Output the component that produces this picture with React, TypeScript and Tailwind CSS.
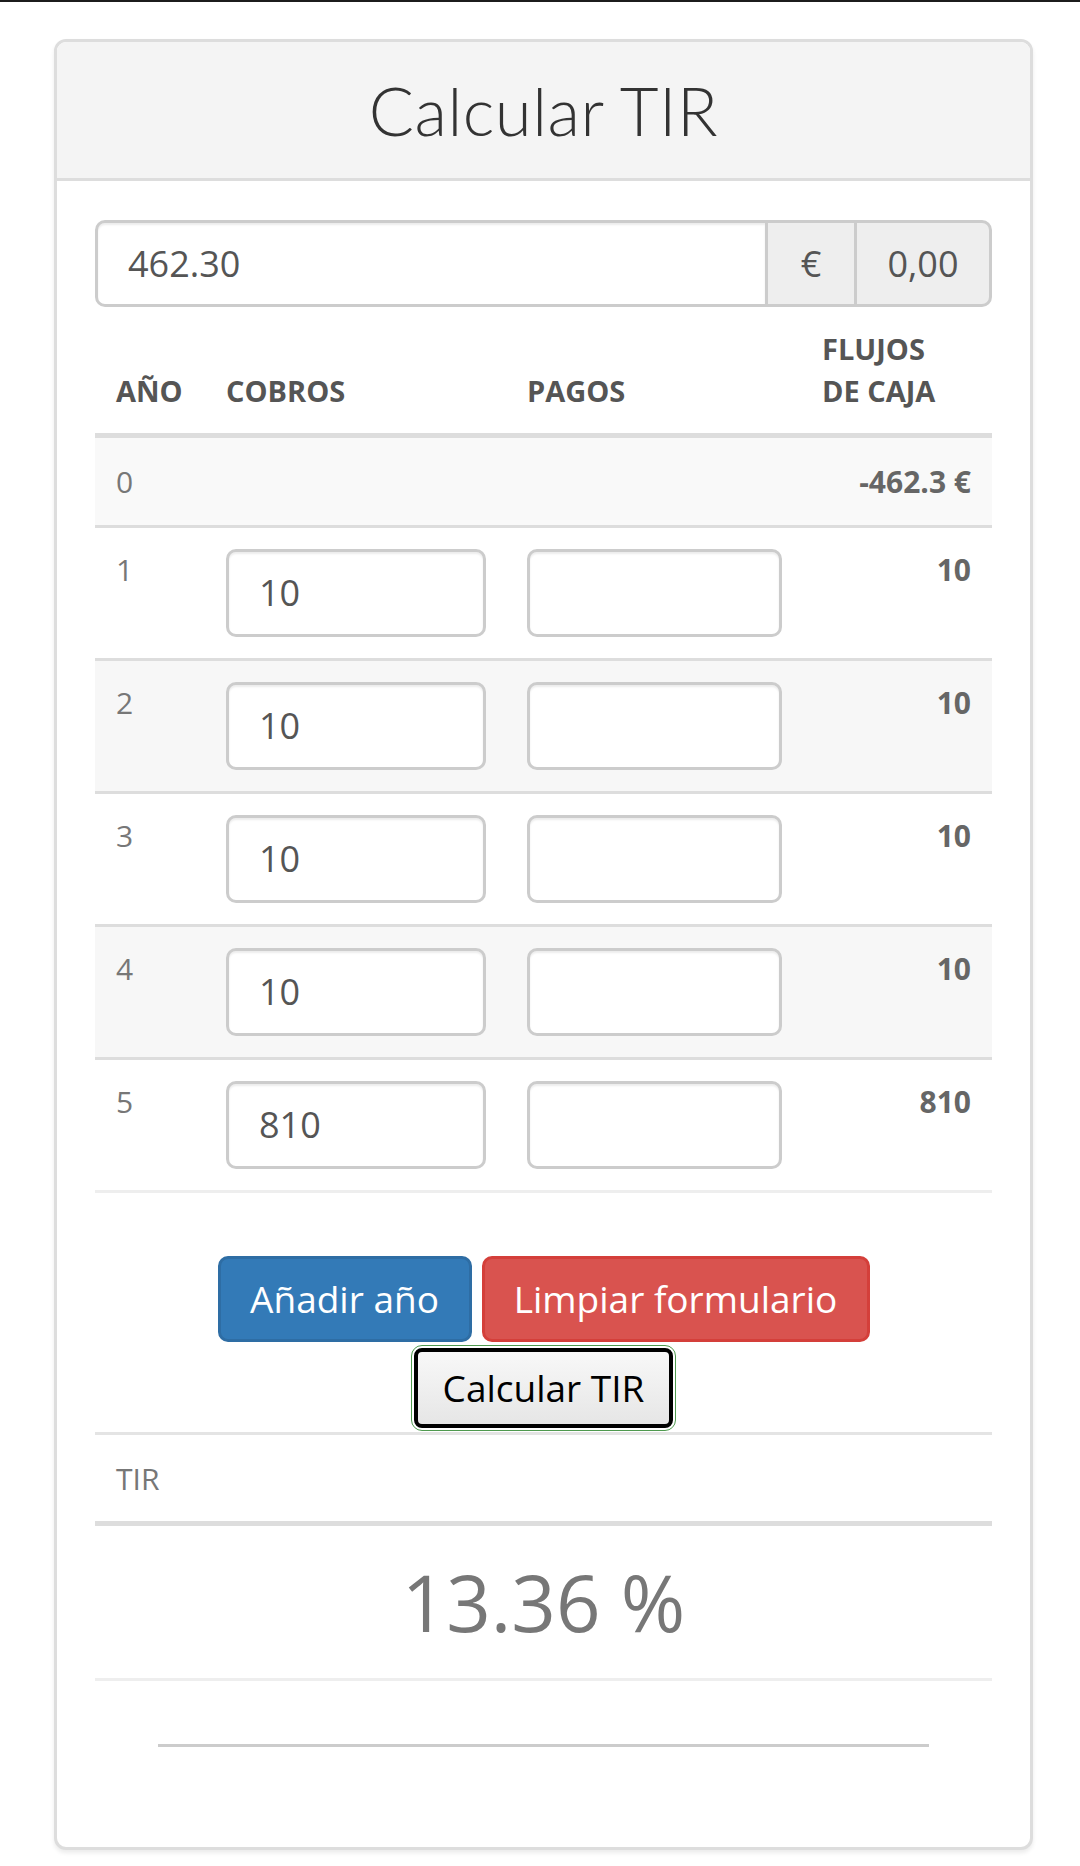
import React from "react";

const rows = [
  { year: 1, cobros: "10", flujo: "10" },
  { year: 2, cobros: "10", flujo: "10" },
  { year: 3, cobros: "10", flujo: "10" },
  { year: 4, cobros: "10", flujo: "10" },
  { year: 5, cobros: "810", flujo: "810" },
];

const CellInput = ({ value, w }: { value: string; w: string }) => (
  <div
    className={`${w} h-[88px] border-[3px] border-[#ccc] rounded-[10px] bg-white shadow-[inset_0_2px_2px_rgba(0,0,0,0.075)] flex items-center pl-[30px] text-[36px] text-[#555]`}
  >
    {value}
  </div>
);

const App = () => {
  return (
    <div className="min-h-[1866px] bg-white font-['Open_Sans',sans-serif]">
      <div className="h-[2px] bg-[#1c1c1c]" />
      <div className="ml-[54px] mt-[37px] w-[979px] h-[1811px] border-[3px] border-[#ddd] rounded-[12px] bg-white shadow-[0_3px_4px_rgba(0,0,0,0.08)] overflow-hidden flex flex-col">
        <div className="h-[139px] bg-[#f4f4f4] border-b-[3px] border-[#ddd] flex items-center justify-center">
          <h1 className="font-['Lato',sans-serif] font-light text-[67px] text-[#333] leading-none tracking-[0.5px]">
            Calcular TIR
          </h1>
        </div>

        <div className="px-[38px] pt-[39px] flex flex-col">
          {/* importe inicial */}
          <div className="flex h-[87px] text-[36px] text-[#555]">
            <div className="flex-1 border-[3px] border-[#ccc] rounded-l-[10px] flex items-center pl-[30px] shadow-[inset_0_2px_2px_rgba(0,0,0,0.075)]">
              462.30
            </div>
            <div className="w-[86px] bg-[#eee] border-y-[3px] border-[#ccc] flex items-center justify-center">
              €
            </div>
            <div className="w-[138px] bg-[#eee] border-[3px] border-[#ccc] rounded-r-[10px] flex items-center justify-center">
              0,00
            </div>
          </div>

          {/* tabla de flujos */}
          <table className="w-full table-fixed border-collapse text-[30px] leading-[42px]">
            <colgroup>
              <col className="w-[110px]" />
              <col className="w-[301px]" />
              <col className="w-[295px]" />
              <col className="w-[191px]" />
            </colgroup>
            <thead>
              <tr className="border-b-[5px] border-[#ddd] text-[#555] text-[29px] font-bold">
                <th className="p-[21px] pt-[22px] text-left align-bottom">AÑO</th>
                <th className="p-[21px] text-left align-bottom">COBROS</th>
                <th className="p-[21px] text-left align-bottom">PAGOS</th>
                <th className="p-[21px] text-left align-bottom">
                  FLUJOS
                  <br />
                  DE CAJA
                </th>
              </tr>
            </thead>
            <tbody className="text-[#777]">
              <tr className="bg-[#f9f9f9]">
                <td className="px-[21px] pt-[23px] pb-[22px]">0</td>
                <td className="px-[21px]"></td>
                <td className="px-[21px]"></td>
                <td className="px-[21px] pt-[23px] pb-[22px] text-right font-bold text-[#666]">-462.3 €</td>
              </tr>
              {rows.map((r, i) => (
                <tr
                  key={r.year}
                  className={`border-t-[3px] border-[#ddd] ${
                    i % 2 === 1 ? "bg-[#f7f7f7]" : "bg-white"
                  } ${i === rows.length - 1 ? "border-b-[3px] border-b-[#eee]" : ""}`}
                >
                  <td className="p-[21px] align-top">{r.year}</td>
                  <td className="p-[21px] align-top">
                    <CellInput value={r.cobros} w="w-[260px]" />
                  </td>
                  <td className="p-[21px] align-top">
                    <CellInput value="" w="w-[255px]" />
                  </td>
                  <td className="p-[21px] align-top text-right font-bold text-[#666]">
                    {r.flujo}
                  </td>
                </tr>
              ))}
            </tbody>
          </table>

          {/* botones */}
          <div className="mt-[63px] flex justify-center gap-[10px] text-[37px]">
            <button className="w-[254px] h-[86px] rounded-[10px] bg-[#337ab7] border-[3px] border-[#2e6da4] text-white">
              Añadir año
            </button>
            <button className="w-[388px] h-[86px] rounded-[10px] bg-[#d9534f] border-[3px] border-[#d43f3a] text-white">
              Limpiar formulario
            </button>
          </div>
          <div className="mt-[3px] flex justify-center">
            <span className="inline-flex p-[2px] border-[1.5px] border-[#4f9a4f] rounded-[11px]">
              <button className="w-[259px] h-[80px] border-[4px] border-black rounded-[8px] bg-gradient-to-b from-[#f8f8f8] to-[#e6e6e6] text-black text-[37px]">
                Calcular TIR
              </button>
            </span>
          </div>

          {/* resultado */}
          <div className="border-t-[3px] border-[#e4e4e4] mt-[1px]">
            <div className="h-[86px] px-[21px] flex items-center text-[30px] text-[#777] border-b-[5px] border-[#ddd] box-content">
              TIR
            </div>
            <div className="h-[152px] flex items-center justify-center text-[78px] text-[#777] border-b-[3px] border-[#eee] box-content">
              13.36 %
            </div>
          </div>
          <div className="mx-[63px] mt-[63px] h-[3px] bg-[#ccc]" />
        </div>
      </div>
    </div>
  );
};

export default App;
